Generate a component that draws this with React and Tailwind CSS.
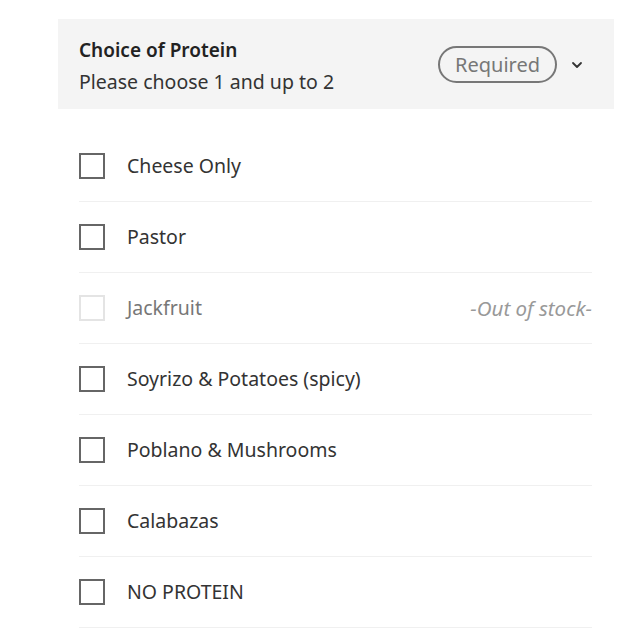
import React from "react";

const items = [
  { name: "Cheese Only" },
  { name: "Pastor" },
  { name: "Jackfruit", out: true },
  { name: "Soyrizo & Potatoes (spicy)" },
  { name: "Poblano & Mushrooms" },
  { name: "Calabazas" },
  { name: "NO PROTEIN" },
];

export default function App() {
  return (
    <div className="w-[640px] h-[640px] bg-white overflow-hidden pt-[19px]" style={{ fontFamily: '"Noto Sans", "Open Sans", sans-serif' }}>
      <div className="ml-[58px] w-[556px] h-[90px] bg-[#f4f4f4] flex items-center pl-[21px] pr-[30px]">
        <div className="flex-1 flex flex-col pt-[3px]">
          <div className="text-[19px] font-semibold text-[#222] leading-[26px]">Choice of Protein</div>
          <div className="text-[19.5px] text-[#333] leading-[26px] mt-[6px]">Please choose 1 and up to 2</div>
        </div>
        <div className="flex items-center mt-[1px]">
          <div className="h-[37px] w-[119px] rounded-full border-2 border-[#777] flex items-center justify-center text-[20px] text-[#777]">Required</div>
          <svg className="ml-[13px]" width="14" height="14" viewBox="0 0 14 14" fill="none">
            <path d="M3 5 L7 9 L11 5" stroke="#333" strokeWidth="1.8" strokeLinecap="round" strokeLinejoin="round" />
          </svg>
        </div>
      </div>
      <div className="ml-[79px] w-[513px] mt-[22px]">
        {items.map((it) => (
          <div key={it.name} className="h-[71px] flex items-center border-b border-[#f0f0f0]">
            <div className={`w-[26px] h-[26px] border-2 ${it.out ? "border-[#e4e4e4]" : "border-[#666]"}`} />
            <div className={`ml-[22px] flex-1 text-[19.5px] ${it.out ? "text-[#777]" : "text-[#333]"}`}>{it.name}</div>
            {it.out && <div className="text-[20.5px] italic text-[#999]">-Out of stock-</div>}
          </div>
        ))}
      </div>
    </div>
  );
}
